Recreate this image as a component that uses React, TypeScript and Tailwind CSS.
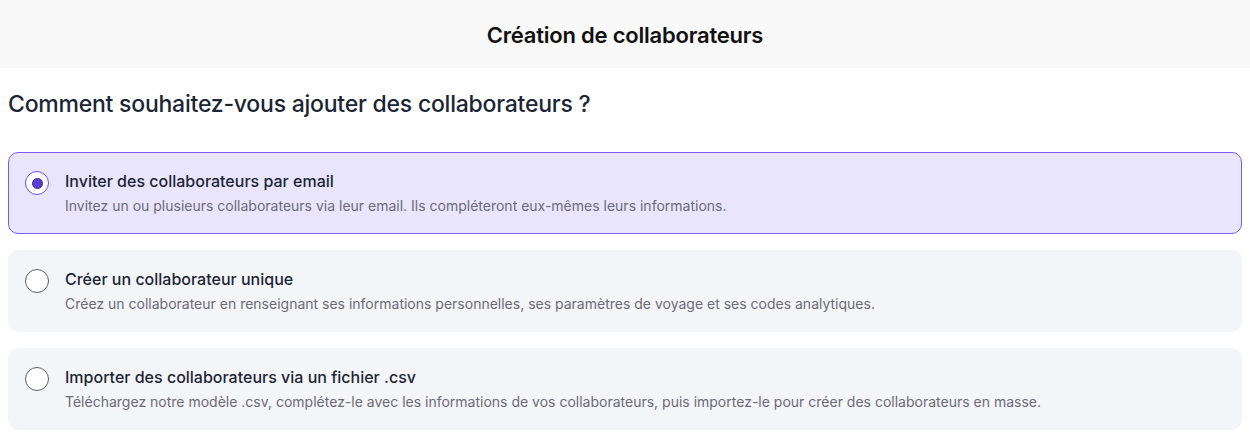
const options = [
  {
    id: "email",
    title: "Inviter des collaborateurs par email",
    description:
      "Invitez un ou plusieurs collaborateurs via leur email. Ils compléteront eux-mêmes leurs informations.",
  },
  {
    id: "single",
    title: "Créer un collaborateur unique",
    description:
      "Créez un collaborateur en renseignant ses informations personnelles, ses paramètres de voyage et ses codes analytiques.",
  },
  {
    id: "csv",
    title: "Importer des collaborateurs via un fichier .csv",
    description:
      "Téléchargez notre modèle .csv, complétez-le avec les informations de vos collaborateurs, puis importez-le pour créer des collaborateurs en masse.",
  },
];

function Radio({ checked }: { checked: boolean }) {
  if (checked) {
    return (
      <span className="flex h-6 w-6 shrink-0 items-center justify-center rounded-full border border-[#6b4ef0] bg-white">
        <span className="h-[11px] w-[11px] rounded-full border border-[#3a2a8c] bg-[#5b3fd6]" />
      </span>
    );
  }
  return <span className="h-6 w-6 shrink-0 rounded-full border border-[#5c5c66] bg-white" />;
}

export default function App() {
  const selected = "email";
  return (
    <div className="min-h-screen bg-white font-['Inter',sans-serif] text-[#1b2534]">
      <header className="flex h-[68px] items-center justify-center bg-[#f9f9f9]">
        <h1 className="mt-[2px] text-[22px] font-semibold tracking-[-0.01em] text-[#111]">Création de collaborateurs</h1>
      </header>

      <div className="px-2">
        <h2 className="mt-[21px] text-[23px] font-medium leading-[30px] tracking-[-0.01em] text-[#1b2534]">
          Comment souhaitez-vous ajouter des collaborateurs ?
        </h2>

        <div className="mt-[33px] flex flex-col gap-4">
          {options.map((o) => {
            const checked = o.id === selected;
            return (
              <div
                key={o.id}
                className={
                  checked
                    ? "flex h-[82px] items-start gap-4 rounded-[10px] border border-[#7a5af0] bg-[#e9e5fd] px-4 pt-[18px]"
                    : "flex h-[82px] items-start gap-4 rounded-[10px] border border-transparent bg-[#f4f5f9] px-4 pt-[18px]"
                }
              >
                <Radio checked={checked} />
                <div className="-mt-[1px] flex flex-col">
                  <span className="text-[16px] font-medium leading-[22px] text-[#1b2534]">{o.title}</span>
                  <span className="mt-[5px] text-[14px] leading-[18px] text-[#6b6b76]">{o.description}</span>
                </div>
              </div>
            );
          })}
        </div>
      </div>
    </div>
  );
}
